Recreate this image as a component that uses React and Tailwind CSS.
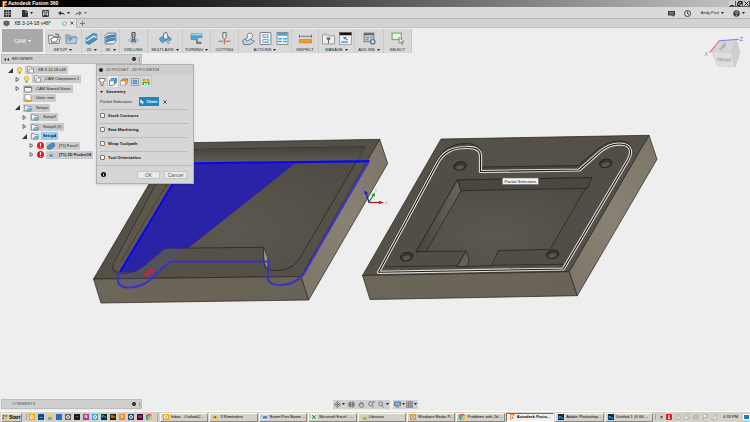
// App.jsx - CAM workspace: toolbars, browser tree, pocket dialog and 3D view

const RIBBON = [
  { label: 'SETUP', menu: true, icons: ['setup', 'folder'], width: 'w-[37px]' },
  { label: '2D', menu: true, icons: ['mill2d'], width: 'w-[20px]' },
  { label: '3D', menu: true, icons: ['mill3d'], width: 'w-[18px]' },
  { label: 'DRILLING', icons: ['drill'], width: 'w-[28px]' },
  { label: 'MULTI-AXIS', menu: true, icons: ['multi'], width: 'w-[35px]' },
  { label: 'TURNING', menu: true, icons: ['turning'], width: 'w-[28px]' },
  { label: 'CUTTING', icons: ['cutting'], width: 'w-[28px]' },
  { label: 'ACTIONS', menu: true, icons: ['simulate', 'post', 'sheet'], width: 'w-[53px]' },
  { label: 'INSPECT', icons: ['measure'], width: 'w-[27px]' },
  { label: 'MANAGE', menu: true, icons: ['library', 'task'], width: 'w-[36px]' },
  { label: 'ADD-INS', menu: true, icons: ['addins'], width: 'w-[29px]' },
  { label: 'SELECT', icons: ['select'], width: 'w-[28px]' },
];

const TREE = [
  { label: 'XB 3-14-18 v48', pad: 'pl-[7px]', open: true, mark: 'bulb', icon: 'component' },
  { label: 'CAM Component 1', pad: 'pl-[14px]', open: false, mark: 'bulb', icon: 'component' },
  { label: 'CAM Named Views', pad: 'pl-[14px]', open: false, icon: 'views' },
  { label: 'Units: mm', pad: 'pl-[14px]', icon: 'units' },
  { label: 'Setups', pad: 'pl-[14px]', open: true, icon: 'setupSmall' },
  { label: 'Setup3', pad: 'pl-[21px]', open: false, icon: 'setupSmall' },
  { label: 'Setup3 (2)', pad: 'pl-[21px]', open: false, icon: 'setupSmall' },
  { label: 'Setup4', pad: 'pl-[21px]', open: true, icon: 'setupSmall', selected: true },
  { label: '[T1] Face2', pad: 'pl-[28px]', open: false, mark: 'error', icon: 'face' },
  { label: '[T1] 2D Pocket18', pad: 'pl-[28px]', open: false, mark: 'error', icon: 'pocket', bold: true },
];

const OPTIONS = ['Stock Contours', 'Rest Machining', 'Wrap Toolpath', 'Tool Orientation'];

const QUICK_LAUNCH = [
  { name: 'Outlook', bg: 'bg-[#f5a800]', ring: true },
  { name: 'TeamViewer', bg: 'bg-[#0b4f8a]', glyph: '↔' },
  { name: 'Explorer', bg: 'bg-[#e8cf72]', folder: true },
  { name: 'Desktop', bg: 'bg-[#1b6fc4]' },
  { name: 'Search', bg: 'bg-[#5b6675]', ring: true },
  { name: 'Console', bg: 'bg-[#1c1c1c]', glyph: '··' },
  { name: 'OneNote', bg: 'bg-[#a63a96]', glyph: 'N' },
  { name: 'Explorer web', bg: 'bg-[#36a9dc]', ring: true },
  { name: 'Photoshop', bg: 'bg-[#052c3f]', glyph: 'Ps', fg: 'text-[#31c5f0]' },
  { name: 'Bridge', bg: 'bg-[#2d1c02]', glyph: 'Br', fg: 'text-[#f5a31c]' },
  { name: 'SolidWorks', bg: 'bg-[#e88a2a]', glyph: 'S' },
  { name: 'Globe', bg: 'bg-[#27526e]', ring: true },
  { name: 'InDesign', bg: 'bg-[#4a0038]', glyph: 'Id', fg: 'text-[#ff4ea8]' },
  { name: 'Chrome', chrome: true },
];

const TASKS = [
  { label: 'Inbox - Outlook2...', icon: 'outlook' },
  { label: '3 Reminders', icon: 'bell' },
  { label: 'Boom Pins Boom ...', icon: 'word' },
  { label: 'Microsoft Excel - ...', icon: 'excel' },
  { label: 'Libraries', icon: 'libraries' },
  { label: 'Windows Media P...', icon: 'media' },
  { label: 'Problems with 2d ...', icon: 'chrome' },
  { label: 'Autodesk Fusio...', icon: 'fusion', active: true },
  { label: 'Adobe Photoshop...', icon: 'ps' },
  { label: 'Untitled-1 @ 66....', icon: 'ps' },
];

export default function App() {
  return (
    <div className="flex h-screen flex-col overflow-hidden bg-[#eeeeee] font-['Liberation_Sans',Arial,sans-serif] text-[4px] leading-[6px] text-[#1c1c1c]">
      <TitleBar />
      <QuickBar />
      <TabBar />
      <Ribbon />
      <main className="relative flex min-h-0 flex-1 flex-col justify-between">
        <Scene />
        <Browser />
        <PocketDialog />
        <ViewCube />
        <BottomBar />
      </main>
      <TaskBar />
    </div>
  );
}

function TitleBar() {
  return (
    <header className="flex h-[7px] shrink-0 items-center bg-linear-to-r from-[#050505] from-10% via-[#6b6b6b] via-60% to-[#c8c8c8] pl-[2px]">
      <svg viewBox="0 0 12 14" className="h-[6px] w-[5px]">
        <path d="M1 0h11v5H7v2h4v4H6l-2 3H1z" fill="#f58220" />
        <path d="M3 2h7v2H5v10H3z" fill="#fff" />
      </svg>
      <h1 className="ml-[1px] text-[5px] leading-[7px] font-bold text-white">Autodesk Fusion 360</h1>
      <div className="ml-auto flex">
        {['minimize', 'restore', 'close'].map(kind => (
          <button key={kind} aria-label={kind} className="flex h-[6px] w-[7px] items-center justify-center border-r border-b border-[#555] bg-[#d4d0c8]">
            <svg viewBox="0 0 10 10" className="size-[5px]" fill="none" stroke="#111" strokeWidth="2">
              {kind === 'minimize' && <path d="M1 9h6" />}
              {kind === 'restore' && <path d="M3 4V1h6v5H7M1 4h5v5H1z" />}
              {kind === 'close' && <path d="M1 1l8 8M9 1L1 9" />}
            </svg>
          </button>
        ))}
      </div>
    </header>
  );
}

function Caret() {
  return (
    <svg viewBox="0 0 6 4" className="h-[2px] w-[3px] shrink-0">
      <path d="M0 0h6L3 4z" fill="#222" />
    </svg>
  );
}

function QuickBar() {
  return (
    <div className="flex h-[12px] shrink-0 items-center border-b border-[#b4b4b4] bg-[#dadada] pt-px pl-[4px]">
      <button aria-label="Data panel" className="w-[8px]">
        <svg viewBox="0 0 14 14" className="size-[7px]" fill="#2e2e2e">
          <path d="M0 0h4v4H0zM5 0h4v4H5zM10 0h4v4h-4zM0 5h4v4H0zM5 5h4v4H5zM10 5h4v4h-4zM0 10h4v4H0zM5 10h4v4H5zM10 10h4v4h-4z" />
        </svg>
      </button>
      <button aria-label="File" className="ml-[10px] flex items-center gap-[2px]">
        <svg viewBox="0 0 12 14" className="h-[7px] w-[6px]"><path d="M0 0h7v5h5v9H0z" fill="#333" /><path d="M8 0l4 4H8z" fill="#333" /></svg>
        <Caret />
      </button>
      <button aria-label="Save" className="ml-[9px]">
        <svg viewBox="0 0 14 14" className="size-[7px]" fill="none" stroke="#333" strokeWidth="1.8">
          <path d="M1 1h12v12H1zM4 1v5h6V1" /><path d="M4 10h6v3H4z" fill="#333" />
        </svg>
      </button>
      <button aria-label="Undo" className="ml-[9px] flex items-center gap-[2px]">
        <svg viewBox="0 0 14 10" className="h-[5px] w-[7px]"><path d="M0 4l6-4v3c5 0 7 2 8 6-2-3-4-3-8-3v3z" fill="#333" /></svg>
        <Caret />
      </button>
      <button aria-label="Redo" className="ml-[5px] flex items-center gap-[2px] opacity-60">
        <svg viewBox="0 0 14 10" className="h-[5px] w-[7px]"><path d="M14 4L8 0v3C3 3 1 5 0 9c2-3 4-3 8-3v3z" fill="#333" /></svg>
        <Caret />
      </button>
      <div className="ml-auto flex items-center pr-[5px]">
        <button aria-label="Comments">
          <svg viewBox="0 0 14 14" className="size-[7px]"><path d="M0 2h14v9h-2v3l-3-3H0z" fill="#333" /><path d="M2 5h10M2 8h10" stroke="#dadada" /></svg>
        </button>
        <button aria-label="Job status" className="ml-[9px]">
          <svg viewBox="0 0 14 14" className="size-[7px]" fill="none" stroke="#333" strokeWidth="1.8"><circle cx="7" cy="7" r="6" /><path d="M7 3v4l3 2" /></svg>
        </button>
        <button className="ml-[10px] flex items-center gap-[2px]">Andy Post <Caret /></button>
        <button aria-label="Help" className="ml-[9px] flex items-center gap-[2px]">
          <svg viewBox="0 0 14 14" className="size-[7px]" fill="none"><circle cx="7" cy="7" r="6.5" fill="#444" /><path d="M5 5.500c0-3 4.500-2.500 4 0-.3 1.200-2 1.500-2 3M7 10v1.500" stroke="#ddd" strokeWidth="1.500" /></svg>
          <Caret />
        </button>
      </div>
    </div>
  );
}

function TabBar() {
  return (
    <nav className="flex h-[9px] shrink-0 items-center border-b border-[#c2c2c2] bg-[#d3d3d3]">
      <button className="flex h-[9px] w-[77px] items-center border-r border-[#b4b4b4] bg-[#e6e6e6] pl-[3px] text-[5px]">
        <svg viewBox="0 0 14 14" className="size-[7px] shrink-0"><path d="M1 3l6-2 6 2v6l-6 4-6-4z" fill="#555" /><path d="M1 3l6 2 6-2M7 5v8" stroke="#999" fill="none" /></svg>
        <span className="ml-[4px] whitespace-nowrap">XB 3-14-18 v48*</span>
        <svg viewBox="0 0 10 10" className="ml-auto size-[5px] shrink-0"><path d="M5 1l3.500 1.500L9 6 6 9 2 8 1 4z" fill="none" stroke="#35b59c" strokeWidth="1.500" /></svg>
        <svg viewBox="0 0 10 10" className="mr-[2px] ml-[3px] size-[4px] shrink-0"><path d="M1 1l8 8M9 1L1 9" stroke="#333" strokeWidth="2" /></svg>
      </button>
      <button aria-label="New tab" className="ml-[3px]">
        <svg viewBox="0 0 10 10" className="size-[5px]"><path d="M5 0v10M0 5h10" stroke="#777" strokeWidth="2" /></svg>
      </button>
    </nav>
  );
}

function Ribbon() {
  return (
    <div className="flex h-[25px] shrink-0 pt-px pl-[2px]">
      <button className="mr-[2px] flex h-[23px] w-[41px] shrink-0 items-center justify-center gap-[2px] bg-[#a9a9a9] text-[5px] text-white">
        CAM
        <svg viewBox="0 0 6 4" className="h-[2px] w-[3px]"><path d="M0 0h6L3 4z" fill="#fff" /></svg>
      </button>
      <div className="flex h-[24px] bg-[#d9d9d9]">
        {RIBBON.map(group => (
          <button key={group.label} className={`flex shrink-0 flex-col items-center justify-between border-r border-[#cbcbcb] pt-[3px] ${group.width}`}>
            <span className="flex gap-[4px]">
              {group.icons.map(name => <RibbonIcon key={name} name={name} />)}
            </span>
            <span className="flex items-center gap-[2px] whitespace-nowrap">
              {group.label}
              {group.menu && <Caret />}
            </span>
          </button>
        ))}
      </div>
    </div>
  );
}

const RIBBON_ICONS = {
  setup: (
    <>
      <path d="M1 6h7l2 3h13l-3 12H2z" fill="#f4f6f8" stroke="#59636c" strokeWidth="1.500" />
      <path d="M5 13l7-4 7 2-3 7-9 1z" fill="#fff" stroke="#444" strokeWidth="1.500" />
      <path d="M13 4h6v5" fill="none" stroke="#444" strokeWidth="1.500" />
    </>
  ),
  folder: (
    <>
      <path d="M1 5h7l2 3h11v13H2z" fill="#9fb3c4" stroke="#73828f" />
      <path d="M5 11h18l-4 10H2z" fill="#bfd0dd" stroke="#73828f" />
      <path d="M7 8l7 6-7 4z" fill="#4da3dc" />
    </>
  ),
  mill2d: (
    <>
      <path d="M1 12L16 2l7 3L8 15z" fill="#5aa7dd" stroke="#2a628c" />
      <path d="M1 16L16 6l7 3L8 19z" fill="#fff" stroke="#2a628c" />
      <path d="M1 20l15-10 7 3L8 23z" fill="#3f93d0" stroke="#2a628c" />
    </>
  ),
  mill3d: (
    <>
      <path d="M2 7l5-5h15v15l-5 5H2z" fill="#eef3f7" stroke="#4c5c69" strokeWidth="1.500" />
      <path d="M4 9c4-4 8-3 16-4v4c-8 1-10 0-16 4zM4 15c5-4 9-2 16-4v4c-8 1-10 1-16 4z" fill="#3f93d0" stroke="#24577d" />
    </>
  ),
  drill: (
    <>
      <path d="M2 15l10-5 10 5-10 7z" fill="#f2f2f2" stroke="#777" />
      <ellipse cx="12" cy="16" rx="5" ry="2.500" fill="#4da3dc" stroke="#333" />
      <path d="M9 1h6v6l-2 8h-2L9 7z" fill="#ddd" stroke="#3a3a3a" strokeWidth="1.500" />
      <path d="M9 5l6-2M9 8l6-2M10 11l4-2" stroke="#3a3a3a" />
    </>
  ),
  multi: (
    <>
      <path d="M1 12l6-4 5 3 5-3 6 5-5 5-6-2-5 4-5-4z" fill="#4da3dc" stroke="#2a628c" />
      <path d="M9 2l5-1 3 10-5 3-4-4z" fill="#f1f1f1" stroke="#555" strokeWidth="1.500" />
      <path d="M12 14l5 8 3-4" fill="#ccc" stroke="#666" />
    </>
  ),
  turning: (
    <>
      <path d="M2 3h20v7h-8v4H2z" fill="#4da3dc" stroke="#31719e" />
      <path d="M2 3h20v3H2z" fill="#a8d4f0" />
      <path d="M10 15h5l-1 3h7v4h-9z" fill="#777" />
    </>
  ),
  cutting: (
    <>
      <path d="M9 1h6v9l-3 4-3-4z" fill="#e6e6e6" stroke="#555" strokeWidth="1.500" />
      <path d="M12 13v8" stroke="#e2562d" strokeWidth="2" />
      <path d="M1 17h9M14 17h9" stroke="#777" strokeWidth="2" />
      <circle cx="12" cy="21" r="2" fill="#ef8350" />
    </>
  ),
  simulate: (
    <>
      <path d="M1 16l8-5 8 3 6 3-8 6H3z" fill="#b8d9ef" stroke="#5a6871" strokeWidth="1.500" />
      <path d="M10 6c0-5 9-5 10 0 0 4-4 4-4 7l-7 4-3-4c4-2 5-3 4-7z" fill="#f5f5f5" stroke="#666" strokeWidth="1.500" />
    </>
  ),
  post: (
    <>
      <rect x="2" y="1" width="20" height="22" rx="1" fill="#f4f9fd" stroke="#666" strokeWidth="1.500" />
      <text x="12" y="11" textAnchor="middle" fontSize="10" fontWeight="bold" fill="#2b93dd">G1</text>
      <text x="12" y="21" textAnchor="middle" fontSize="10" fontWeight="bold" fill="#2b93dd">G2</text>
    </>
  ),
  sheet: (
    <>
      <rect x="2" y="1" width="20" height="22" fill="#f7f7f7" stroke="#777" strokeWidth="1.500" />
      <path d="M3 2h18v5H3zM4 11h7v3H4zM13 11h7v3h-7zM4 16h7v3H4zM13 16h7v3h-7z" fill="#3ea5ea" />
    </>
  ),
  measure: (
    <>
      <path d="M1 8h22M1 5v6M23 5v6" stroke="#666" strokeWidth="1.500" />
      <path d="M1 14h22v6H1z" fill="#f4a321" stroke="#a06c12" />
    </>
  ),
  library: (
    <>
      <path d="M1 4h8l2 3h12v15H1z" fill="#eef0f2" stroke="#888" strokeWidth="1.500" />
      <path d="M8 10h8l-1 4-2 1v6h-2v-6l-2-1z" fill="#666" />
      <path d="M1 4h8l2 3H1z" fill="#9fd2f2" />
    </>
  ),
  task: (
    <>
      <rect x="1" y="1" width="22" height="22" fill="#f2f2f2" stroke="#666" />
      <path d="M1 1h22v5H1z" fill="#111" />
      <path d="M4 17h12v3H4z" fill="#3ea5ea" />
      <path d="M8 9l8 6M9 13l4-4" stroke="#2d7fb9" strokeWidth="2" />
    </>
  ),
  addins: (
    <>
      <rect x="2" y="2" width="18" height="16" fill="#c3ccd4" stroke="#5e6a74" strokeWidth="1.500" />
      <path d="M2 2h18v4H2z" fill="#5e6a74" />
      <path d="M5 10h6M5 14h5M13 10h4" stroke="#7d8993" strokeWidth="2" />
      <circle cx="18" cy="18" r="4" fill="#dfe9f2" stroke="#52779b" strokeWidth="2.500" />
    </>
  ),
  select: (
    <>
      <rect x="2" y="2" width="17" height="12" fill="#e9f2e4" stroke="#6fb34b" strokeWidth="2" />
      <path d="M15 10v11l3-3 2 5 2-1-2-4h4z" fill="#fff" stroke="#444" />
    </>
  ),
};

function RibbonIcon({ name }) {
  return <svg viewBox="0 0 24 24" className="size-[13px]" fill="none">{RIBBON_ICONS[name]}</svg>;
}

const SMALL_ICONS = {
  component: <path d="M3 1h6l3 3v2h3v8H6v-2H3zM6 12V6h6" fill="#f4f4f4" stroke="#666" />,
  views: <><rect x="1" y="3" width="14" height="11" rx="1" fill="#f4f4f4" stroke="#777" strokeWidth="1.500" /><path d="M1 5h14" stroke="#777" strokeWidth="2" /></>,
  units: <><path d="M2 1h9l3 3v11H2z" fill="#fff" stroke="#666" /><path d="M3 9v5h9z" fill="#f4921e" /><path d="M3 13h11" stroke="#f4921e" strokeWidth="2" /></>,
  setupSmall: <><path d="M1 3h5l1 2h7v9H1z" fill="#f4f4f4" stroke="#7d8a94" strokeWidth="1.500" /><path d="M5 12l4-4 6 2-2 4H6z" fill="#7ec0ea" stroke="#44687f" /></>,
  face: <path d="M1 8l9-6 5 1v6l-9 6-5-2z" fill="#3f8fc9" stroke="#28587c" />,
  pocket: <><path d="M1 9l7-6 7 5-4 7H4z" fill="#e9eef2" stroke="#999" /><ellipse cx="8" cy="9" rx="4" ry="3" fill="#3a90cc" /></>,
  bulb: <><path d="M8 1a5 5 0 00-3 9v2h6v-2a5 5 0 00-3-9z" fill="#ffdf3c" stroke="#9a7c12" /><path d="M6 14h4" stroke="#555" strokeWidth="2" /></>,
  error: <><circle cx="8" cy="8" r="8" fill="#ec1320" /><path d="M8 3v6M8 11v2" stroke="#fff" strokeWidth="2.500" /></>,
  toolTab: <path d="M2 1h12v4l-4 3v7H6V8L2 5z" fill="#f6f6f6" stroke="#555" strokeWidth="1.500" />,
  geometryTab: <><path d="M5 1h10v8l-4 3V4H5z" fill="#3f93d0" stroke="#31719e" /><path d="M1 6l4-2h6v8l-4 3H1z" fill="#fff" stroke="#31719e" strokeWidth="1.500" /><path d="M1 6l4-5h10l-4 5z" fill="#6cb6e8" stroke="#31719e" /></>,
  heightsTab: <><path d="M1 6l5-4h9v7l-4 5H1z" fill="#fff" stroke="#777" /><path d="M1 6l5-4h9l-4 4H1z" fill="#f49a2c" stroke="#a0601a" /><path d="M11 6l4-4v7l-4 5z" fill="#f7b765" stroke="#a0601a" /></>,
  passesTab: <><path d="M1 1h14v14H1z" fill="#e6eef4" stroke="#555" strokeDasharray="2 2" strokeWidth="2" /><path d="M4 4h8v8H4z" fill="#69aede" stroke="#2f6186" /></>,
  linkingTab: <><path d="M1 2h14v5H1z" fill="#f08a2a" /><path d="M3 8l5-6 5 6z" fill="#e9dc34" /><path d="M1 8h14v6H1z" fill="#3aa655" /><path d="M4 14v-4h3v4M9 14v-4h3v4" fill="#fff" /></>,
};

function SmallIcon({ name, className = 'size-[8px]' }) {
  return <svg viewBox="0 0 16 16" className={`shrink-0 ${className}`} fill="none">{SMALL_ICONS[name]}</svg>;
}

function PanelGrip() {
  return (
    <span className="ml-auto flex items-center gap-[3px]">
      <svg viewBox="0 0 8 8" className="size-[4px]"><circle cx="4" cy="4" r="4" fill="#222" /><circle cx="4" cy="4" r="1" fill="#aaa" /></svg>
      <span className="h-[5px] w-px bg-[#999]" />
    </span>
  );
}

function Browser() {
  return (
    <aside className="relative w-[142px] pt-px pl-[1px]">
      <div className="flex h-[10px] items-center border border-[#bdbdbd] bg-[#cfcfcf] pr-px pl-[2px]">
        <svg viewBox="0 0 10 6" className="h-[3px] w-[5px]"><path d="M0 3l4-3v6zM6 3l4-3v6z" fill="#222" /></svg>
        <span className="ml-[3px]">BROWSER</span>
        <PanelGrip />
      </div>
      <ul className="mt-[2px] flex h-[93px] flex-col justify-between">
        {TREE.map(node => (
          <li key={node.label} className={`flex h-[8px] items-center ${node.pad}`}>
            <span className="w-[8px] shrink-0">
              {node.open !== undefined && (
                <svg viewBox="0 0 10 10" className="size-[5px]">
                  {node.open
                    ? <path d="M10 0v10H0z" fill="#333" />
                    : <path d="M2 1l6 4-6 4z" fill="none" stroke="#444" strokeWidth="1.500" />}
                </svg>
              )}
            </span>
            {node.mark && <SmallIcon name={node.mark} className="mr-[2px] size-[7px]" />}
            <span className={`flex h-[8px] items-center gap-[2px] whitespace-nowrap ${node.bold ? 'font-bold' : ''} ${node.selected ? 'bg-[#d6e6f2]' : 'bg-[#cbcbcb]'}`}>
              <SmallIcon name={node.icon} className="ml-px size-[8px]" />
              <span className={`h-[8px] px-[2px] leading-[8px] ${node.selected ? 'bg-[#8fd0fb] font-bold' : ''}`}>{node.label}</span>
            </span>
          </li>
        ))}
      </ul>
    </aside>
  );
}

function PocketDialog() {
  return (
    <section className="absolute top-[11px] left-[96px] w-[98px] border border-[#b0b0b0] bg-[#d6d6d6] shadow-sm">
      <header className="flex h-[10px] items-center bg-[#cdcdcd] pl-[2px] text-[#444]">
        <svg viewBox="0 0 8 8" className="mr-[3px] size-[4px]"><circle cx="4" cy="4" r="4" fill="#222" /></svg>
        2D POCKET : 2D POCKET18
      </header>
      <div className="flex h-[12px] w-[55px] items-stretch border-t border-[#c2c2c2] bg-[#d9d9d9]">
        {['toolTab', 'geometryTab', 'heightsTab', 'passesTab', 'linkingTab'].map(name => (
          <button key={name} aria-label={name} className={`flex w-[11px] items-center justify-center border-r border-[#c9c9c9] ${name === 'geometryTab' ? 'bg-[#ececec]' : ''}`}>
            <SmallIcon name={name} />
          </button>
        ))}
      </div>
      <div className="mr-[5px] ml-[3px]">
        <h2 className="mt-[1px] flex h-[8px] items-center gap-[3px] font-['Open_Sans',sans-serif] font-bold">
          <Caret /> Geometry
        </h2>
        <div className="flex h-[13px] items-center pb-[2px]">
          <span className="w-[39px] whitespace-nowrap">Pocket Selections</span>
          <button className="flex h-[9px] w-[20px] items-center justify-center gap-[2px] bg-[#1f86bb] font-bold text-white">
            <svg viewBox="0 0 10 14" className="h-[6px] w-[4px]"><path d="M1 0v11l3-3 2 5 2-1-2-4h4z" fill="#fff" /></svg>
            Chain
          </button>
          <button aria-label="Clear selection" className="ml-[4px]">
            <svg viewBox="0 0 10 10" className="size-[4px]"><path d="M1 1l8 8M9 1L1 9" stroke="#333" strokeWidth="2" /></svg>
          </button>
        </div>
        {OPTIONS.map(option => (
          <label key={option} className="flex h-[14px] items-center gap-[3px] border-t border-[#bcbcbc] pb-[2px] font-['Open_Sans',sans-serif] font-bold">
            <input type="checkbox" className="size-[5px] appearance-none rounded-[1px] border border-[#777] bg-[#f2f2f2]" />
            {option}
          </label>
        ))}
      </div>
      <footer className="flex h-[18px] items-center border-t border-[#bcbcbc] pr-[6px] pl-[4px]">
        <svg viewBox="0 0 10 10" className="size-[5px]"><circle cx="5" cy="5" r="5" fill="#111" /><path d="M5 4v4M5 2v1" stroke="#fff" strokeWidth="1.500" /></svg>
        <button className="ml-auto h-[8px] w-[23px] border border-[#c4c4c4] bg-[#ececec] text-[5px] text-[#555]">OK</button>
        <button className="ml-[4px] h-[8px] w-[23px] border border-[#c4c4c4] bg-[#ececec] text-[5px] text-[#555]">Cancel</button>
      </footer>
    </section>
  );
}

function ViewCube() {
  return (
    <svg viewBox="0 0 114 100" className="absolute top-[-20px] right-[6px] h-[35px] w-[40px]">
      <path d="M44 22l48-3-13 38-58-5z" fill="#d6d6d6" stroke="#bbb" />
      <path d="M21 52l58 5 10 40-50-2z" fill="#dedede" stroke="#aaa" strokeDasharray="6 3" />
      <path d="M79 57l13-38 11 36-14 42z" fill="#cfcfcf" stroke="#aaa" strokeDasharray="6 3" />
      <text x="37" y="80" fontSize="12" fontWeight="bold" fill="#999" transform="rotate(3 37 80)">FRONT</text>
      <text x="50" y="52" fontSize="13" fontWeight="bold" fill="#999" transform="rotate(-52 50 52)">TOP</text>
      <path d="M44 22L16 56" stroke="#f26b6b" strokeWidth="3" />
      <path d="M44 22l56-4" stroke="#8181ee" strokeWidth="3" />
      <text x="2" y="67" fontSize="14" fill="#f26b6b">X</text>
      <text x="102" y="22" fontSize="15" fill="#6262e8">Z</text>
    </svg>
  );
}

function Scene() {
  const chain = 'M378.500 272.300L438 162C444 152 452 147.500 466 147.500C476 147 480.500 150 480.500 156V171.500L579.300 170L600 151.700C608 145 616 143 624 144.500C631 146 632.500 152 628 160L563.300 269Z';
  const blueLoop = 'M369 161L303 275C296 283 287 285 280 285C271 285 267.500 281 267.700 276.700L268.500 261.500H170L153 277C146 285 136 288 126 287.500C117 286 115.500 279 120 272L185 163.500Z';
  return (
    <svg viewBox="0 53 750 358" preserveAspectRatio="xMidYMid slice" className="absolute inset-0 h-full w-full" fill="none" strokeLinejoin="round">
      <defs>
        <linearGradient id="front" x1="0" x2="1"><stop offset="0" stopColor="#6c655a" /><stop offset="1" stopColor="#696256" /></linearGradient>
        <linearGradient id="side" x1="1" y1="0" x2="0" y2="1"><stop offset="0" stopColor="#7b7468" /><stop offset=".5" stopColor="#888174" /><stop offset="1" stopColor="#7c7568" /></linearGradient>
        <linearGradient id="wall" x1="0" y1="0" x2="0" y2="1"><stop offset="0" stopColor="#46433b" /><stop offset="1" stopColor="#625c51" /></linearGradient>
        <radialGradient id="floor" cx=".45" cy=".65" r=".7"><stop offset="0" stopColor="#5d584f" /><stop offset="1" stopColor="#4f4b43" /></radialGradient>
        <linearGradient id="ramp" x1="0" y1="0" x2="1" y2="0"><stop offset="0" stopColor="#46433b" /><stop offset="1" stopColor="#6b655a" /></linearGradient>
      </defs>

      {/* left block */}
      <g stroke="#24221e" strokeWidth=".7">
        <path d="M93.500 279L173 143L379.700 139.300L301 276.500Z" fill="#555148" />
        <path d="M93.500 279L301 276.500L308.700 300L101 303Z" fill="url(#front)" />
        <path d="M301 276.500L379.700 139.300L387.700 163.500L308.700 300Z" fill="url(#side)" />
        <path d="M113.500 264L174 149.700L365 146.700L300 258C294 267 285 271 276 270.500C266 270 264 267 264 262L263.300 247.300L165 248.300L143 266.700C136 272 130 273.500 120 273.500C113 272 112 268 113.500 264Z" fill="url(#floor)" />
      </g>
      <path d="M174 149.700L365 146.700L356 162L167 163.500Z" fill="url(#wall)" />
      <path d="M114 264L158 181L174 184L120 272C114 271 113 267 114 264Z" fill="#5d574c" />
      <path d="M121 261L167 184" stroke="#36332d" strokeWidth=".6" />
      <path d="M120 272L173 184L185 163.500L295 163.500L188 248.300L165 248.300L143 266.700C136 272 130 273.500 120 272Z" fill="#2a23a6" />
      <path d="M120 273C117 280 117 286 126 287.500C136 288 146 285 153 277L170 262.500L188 248.300H165L143 266.700C136 272 130 273.500 120 273Z" fill="#5550a0" fillOpacity=".25" />
      <path d="M263.500 247.500C265 252 268 256 268 261V269C265 267 263.500 261 263.500 247.500Z" fill="#a0978a" stroke="#24221e" strokeWidth=".6" />
      <path d={blueLoop} stroke="#3933c4" strokeWidth="2" />
      <path d="M120 272L185 163.500L369 161.200" stroke="#0a05f0" strokeWidth="2" />
      <path d="M143.500 275l5.500-4-1-1.300 6.500-1.200-3 5.500-1-1.300-5.500 4z" fill="#f01432" />

      {/* origin triad */}
      <path d="M369 202.500L366 193" stroke="#1e1a9a" strokeWidth="1.200" />
      <path d="M364.500 190l3.700 3.500-3.700 1z" fill="#2a25c0" />
      <path d="M369 202.500l4-7" stroke="#168a16" strokeWidth="1.200" />
      <path d="M375 192.500l-.5 4.500-3.200-2z" fill="#13a813" />
      <path d="M369 202.500h11" stroke="#b01818" strokeWidth="1.200" />
      <path d="M384 202.500l-5-1.800v3.600z" fill="#e01818" />
      <text x="385" y="204" fontSize="4" fill="#f07070">X</text>
      <text x="374.500" y="192" fontSize="4" fill="#3cba3c">Y</text>
      <text x="362" y="189" fontSize="4" fill="#5a56d8">Z</text>

      {/* right block */}
      <g stroke="#24221e" strokeWidth=".7">
        <path d="M362.500 275.500L441 139L649 135.300L569.300 271.700Z" fill="#555148" />
        <path d="M362.500 275.500L569.300 271.700L577.300 295.700L370 299.500Z" fill="url(#front)" />
        <path d="M569.300 271.700L649 135.300L657 159.300L577.300 295.700Z" fill="url(#side)" />
        <path d="M378.500 269L438 158C445 147 456 143 468 143.500C477 144 481.500 149 481.500 153V167L578 165.500L598 149C607 142 616 140 624 141.500C632 143 634 151 629 160L563.300 269Z" fill="#47443c" />
        <path d={chain} fill="#524e45" />
        <path d="M385 266.700L563 264.300" />
        <path d="M416 251.700L457.300 180L591.700 177.700L550 249.300L498.300 250.700L491.700 265.700L457 266.700L466 251Z" fill="url(#floor)" />
        <path d="M457.300 180L591.700 177.700L588 188.300L461 190.700Z" fill="#4b473f" />
        <path d="M457.300 180L461 190.700L426 251.700L416 251.700Z" fill="url(#ramp)" />
        <path d="M466 251L469.300 261L467 266.300L457 266.700Z" fill="#655f54" />
      </g>
      <path d={chain} stroke="#dededa" strokeWidth="3.200" />
      <path d={chain} stroke="#1c1b18" strokeWidth="1.100" />
      {[[460, 166], [406.700, 256.700], [605.700, 163.300], [552.700, 254.300]].map(([cx, cy]) => (
        <g key={cx}>
          <ellipse cx={cx} cy={cy} rx="6.300" ry="4.200" fill="#3a372f" stroke="#1d1b17" strokeWidth=".8" transform={`rotate(-12 ${cx} ${cy})`} />
          <ellipse cx={cx - 0.5} cy={cy + 1.2} rx="4" ry="2.200" fill="#5b564b" transform={`rotate(-12 ${cx} ${cy})`} />
        </g>
      ))}
      <rect x="502.500" y="178" width="36" height="6.500" fill="#f4f4f0" stroke="#666" strokeWidth=".5" />
      <text x="504.500" y="182.700" fontSize="4" fill="#111">Pocket Selections</text>
    </svg>
  );
}

const NAV_ICONS = {
  orbit: <path d="M8 1l3 4 4 3-4 3-3 4-3-4-4-3 4-3zM4 8h8M8 4v8" />,
  look: <path d="M2 4h12v8H2zM5 1v14M11 1v14M1 8h14" />,
  pan: <path d="M4 9V5M6.500 8V2M9 8V2M11.500 9V4M4 8L2 7l3 7h6l2-5" />,
  zoom: <path d="M6 2a4 4 0 100 9 4 4 0 000-9M9 10l4 5M11 2h4M13 0v4" />,
  fit: <path d="M6 2a4 4 0 100 9 4 4 0 000-9M9 10l4 5" />,
  display: <path d="M1 2h14v9H1zM5 14h6" fill="#6db3ea" />,
  grid: <path d="M1 1h14v14H1zM6 1v14M11 1v14M1 6h14M1 11h14" strokeWidth="1" fill="#b9bfc6" />,
};

function NavButton({ name, menu }) {
  return (
    <button aria-label={name} className="flex items-center gap-px">
      <svg viewBox="0 0 16 16" className="size-[7px]" fill="none" stroke="#555" strokeWidth="1.500">{NAV_ICONS[name]}</svg>
      {menu && <Caret />}
    </button>
  );
}

function BottomBar() {
  return (
    <div className="relative mb-[2px] grid grid-cols-[1fr_auto_1fr] items-center">
      <div className="ml-px flex h-[10px] w-[141px] items-center border border-[#bdbdbd] bg-[#cfcfcf] pr-px pl-[10px] text-[#555]">
        COMMENTS
        <PanelGrip />
      </div>
      <div className="flex gap-[3px]">
        <div className="flex h-[9px] items-center gap-[3px] bg-[#d0d0d0] px-px">
          <NavButton name="orbit" menu />
          <NavButton name="look" />
          <NavButton name="pan" />
          <NavButton name="zoom" />
          <NavButton name="fit" menu />
        </div>
        <div className="flex h-[9px] items-center gap-px bg-[#d0d0d0] px-px">
          <NavButton name="display" menu />
          <NavButton name="grid" menu />
        </div>
      </div>
    </div>
  );
}

const CHROME = (
  <>
    <circle cx="8" cy="8" r="8" fill="#e33b2e" />
    <path d="M8 8L1 4a8 8 0 005 12z" fill="#2da94f" />
    <path d="M8 8l-2 8A8 8 0 0015 4H8z" fill="#fbc116" />
    <circle cx="8" cy="8" r="3.500" fill="#4285f4" stroke="#fff" />
  </>
);

const TASK_ICONS = {
  outlook: <><rect width="16" height="16" fill="#f5a800" /><circle cx="8" cy="8" r="4" fill="none" stroke="#fff" strokeWidth="2.500" /></>,
  bell: <><path d="M2 12l2-8 8 2 1 7z" fill="#e6a21c" /><path d="M6 7h5v3H6z" fill="#7a4c06" /></>,
  word: <><rect width="16" height="16" fill="#dfeaf7" /><path d="M2 4l3 9 3-8 3 8 3-9" stroke="#2b6cc4" strokeWidth="2.500" /></>,
  excel: <><rect width="16" height="16" fill="#e6f4e6" /><path d="M3 3l10 10M13 3L3 13" stroke="#2f9a3f" strokeWidth="3" /></>,
  libraries: <><path d="M1 3h6l1 2h7v8H1z" fill="#f2cf58" /><path d="M5 9h10v6H5z" fill="#54b4ea" /></>,
  media: <><rect width="16" height="16" rx="3" fill="#f08a1e" /><circle cx="8" cy="8" r="5" fill="#cfe6f8" /><path d="M6 5l5 3-5 3z" fill="#2f7fc4" /></>,
  chrome: CHROME,
  fusion: <><path d="M3 0h11v5H9v3h4v4H8l-2 4H3z" fill="#f58220" /><path d="M5 3h6v2H7v9H5z" fill="#fff" /></>,
  ps: <><rect width="16" height="16" fill="#052c3f" /><text x="8" y="12" textAnchor="middle" fontSize="11" fontWeight="bold" fill="#31c5f0">Ps</text></>,
};

function TaskBar() {
  return (
    <footer className="flex h-[11px] shrink-0 items-center border-t border-white bg-[#d4d0c8] pl-px text-black">
      <button className="flex h-[9px] w-[21px] shrink-0 items-center gap-px border border-[#8a8780] border-t-white border-l-white text-[5px] font-bold">
        <svg viewBox="0 0 14 14" className="size-[6px]">
          <path d="M1 2l5-1v5H0z" fill="#e5482d" /><path d="M8 1l5 1-1 5H7z" fill="#63b132" /><path d="M0 8h5l-1 5-4-1z" fill="#2d7bd6" /><path d="M7 8h5l-1 5-5 1z" fill="#f4b71c" />
        </svg>
        Start
      </button>
      <div className="ml-[4px] flex shrink-0 items-center gap-[3px] border-l border-[#aaa69e] pr-[5px]">
        {QUICK_LAUNCH.map(app => (
          <button key={app.name} aria-label={app.name} className="first:ml-[2px]">
            {app.chrome ? (
              <svg viewBox="0 0 16 16" className="size-[6px]">{CHROME}</svg>
            ) : (
              <span className={`flex size-[6px] items-center justify-center text-[4px] font-bold ${app.bg} ${app.fg || 'text-white'}`}>
                {app.ring && <span className="size-[4px] rounded-full border border-white" />}
                {app.folder && <span className="mt-[2px] h-[3px] w-[4px] bg-[#54b4ea]" />}
                {app.glyph}
              </span>
            )}
          </button>
        ))}
      </div>
      <div className="flex min-w-0 flex-1 gap-px border-l border-[#aaa69e] pl-[2px]">
        {TASKS.map(task => (
          <button key={task.label} className={`flex h-[9px] min-w-0 flex-1 items-center gap-[2px] overflow-hidden border pl-[2px] whitespace-nowrap ${task.active ? 'border-[#77746d] border-r-white border-b-white bg-[#f3f1ec] font-bold' : 'border-[#8a8780] border-t-white border-l-white'}`}>
            <svg viewBox="0 0 16 16" className="size-[6px] shrink-0" fill="none">{TASK_ICONS[task.icon]}</svg>
            {task.label}
          </button>
        ))}
      </div>
      <div className="ml-[2px] flex shrink-0 items-center gap-[3px] border-l border-[#aaa69e] pl-[4px]">
        <svg viewBox="0 0 6 10" className="h-[4px] w-[3px]"><path d="M0 5l3-4 3 4zM0 6h6v2H0z" fill="#222" /></svg>
        <svg viewBox="0 0 12 12" className="size-[6px]"><rect width="12" height="12" rx="2" fill="#d81e26" /><path d="M6 2v6M4 9h4" stroke="#fff" strokeWidth="2" /></svg>
        <svg viewBox="0 0 12 12" className="size-[6px]" fill="none" stroke="#888"><circle cx="6" cy="6" r="5" fill="#eee" /><path d="M6 3v4M6 8v1" strokeWidth="2" /></svg>
        <svg viewBox="0 0 12 12" className="size-[6px]" fill="#eee" stroke="#888"><path d="M1 4h7v7H1zM4 1h7v7H8" /></svg>
        <svg viewBox="0 0 12 12" className="size-[6px]" fill="none" stroke="#888"><path d="M1 4h2l3-3v10L3 8H1zM8 3c2 2 2 4 0 6M10 1c3 3 3 7 0 10" /></svg>
        <svg viewBox="0 0 12 12" className="size-[6px]" fill="#f4f4f4" stroke="#888"><path d="M2 12V1h8L8 4l2 3H2" /></svg>
        <svg viewBox="0 0 12 12" className="size-[6px]" fill="#f4f4f4" stroke="#888"><path d="M1 11L11 2v9z" /></svg>
        <time className="ml-[3px] whitespace-nowrap">4:33 PM</time>
        <button aria-label="Show desktop" className="ml-[2px] h-[6px] w-[7px] border border-white bg-[#1f78c8]" />
      </div>
    </footer>
  );
}
